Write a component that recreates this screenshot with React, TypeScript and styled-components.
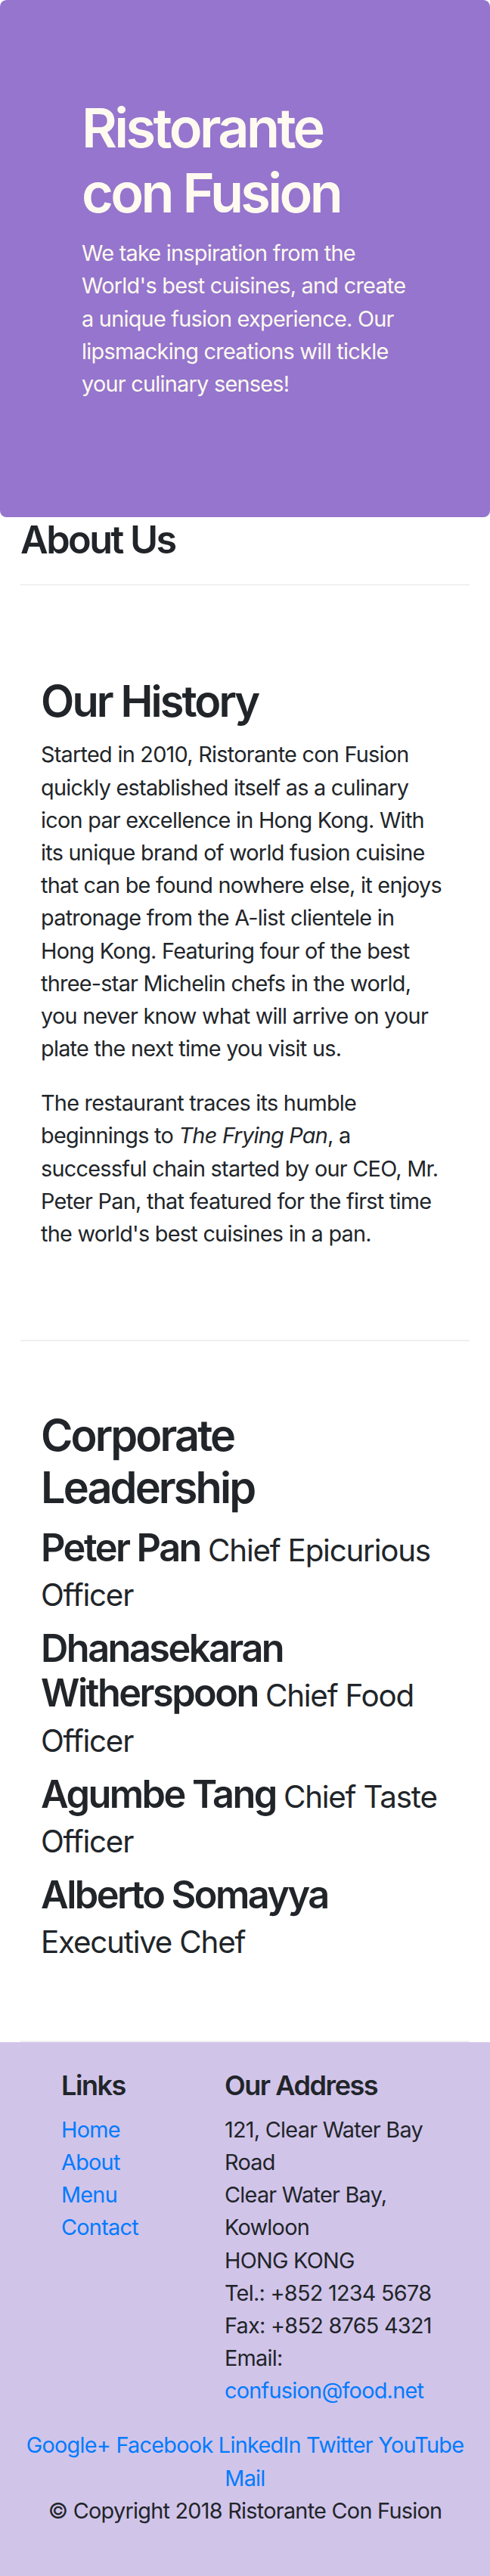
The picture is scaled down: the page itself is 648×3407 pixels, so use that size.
import React from "react";
import styled, { createGlobalStyle } from "styled-components";

const GlobalStyle = createGlobalStyle`
  html { font-size: 28.8px; }
  body {
    margin: 0;
    font-family: Inter, "Noto Sans", "Liberation Sans", sans-serif;
    font-size: 28.8px;
    line-height: 1.5;
    letter-spacing: -0.025em;
    color: #212529;
    background: #fff;
    -webkit-font-smoothing: antialiased;
  }
  * { box-sizing: border-box; }
`;

const Page = styled.div`
  display: flex;
  flex-direction: column;
  min-height: 100vh;
`;

const Jumbotron = styled.header`
  background: #9575cd;
  color: floralwhite;
  padding: 126px 54px;
  border-radius: 8.6px;
`;

const Hero = styled.div`
  padding: 0 54px;
`;

const HeroTitle = styled.h1`
  font-size: 72px;
  line-height: 1.2;
  font-weight: 600;
  letter-spacing: -0.05em;
  margin: 0 0 14.4px;
`;

const HeroLead = styled.p`
  margin: 0 0 28.8px;
`;

const Container = styled.main`
  padding: 0 27px;
`;

const PageTitle = styled.h3`
  font-size: 50.4px;
  line-height: 1.2;
  font-weight: 600;
  letter-spacing: -0.05em;
  margin: 0 0 14.4px;
`;

const Divider = styled.hr`
  margin: 28.8px 0;
  border: 0;
  border-top: 1.8px solid rgba(0, 0, 0, 0.1);
`;

const Section = styled.section`
  padding: 90px 27px;
  border-bottom: 2px solid #efefef;
`;

const SectionTitle = styled.h2`
  font-size: 57.6px;
  line-height: 1.2;
  font-weight: 600;
  letter-spacing: -0.05em;
  margin: 0 0 14.4px;
`;

const Paragraph = styled.p`
  margin: 0 0 28.8px;
`;

const LeaderName = styled.h3`
  font-size: 50.4px;
  line-height: 1.18;
  font-weight: 600;
  letter-spacing: -0.05em;
  margin: 0 0 14.4px;
`;

const Designation = styled.small`
  font-size: 80%;
  font-weight: 400;
  letter-spacing: -0.03em;
`;

const Footer = styled.footer`
  flex: 1 0 auto;
  background: #d1c4e9;
  padding: 36px 0;
`;

const FooterContainer = styled.div`
  padding: 0 27px;
`;

const FooterRow = styled.div`
  display: flex;
  flex-wrap: wrap;
  justify-content: center;
  margin: 0 -27px;
`;

const FooterCol = styled.div<{ $width: string; $offset?: string; $center?: boolean }>`
  flex: 0 0 ${(p) => p.$width};
  max-width: ${(p) => p.$width};
  margin-left: ${(p) => p.$offset ?? "0"};
  padding: 0 27px;
  text-align: ${(p) => (p.$center ? "center" : "left")};
`;

const FooterHeading = styled.h5`
  font-size: 36px;
  line-height: 1.2;
  font-weight: 600;
  letter-spacing: -0.04em;
  margin: 0 0 14.4px;
`;

const LinkList = styled.ul`
  list-style: none;
  padding: 0;
  margin: 0 0 28.8px;
`;

const Link = styled.a`
  color: #007bff;
  text-decoration: none;
`;

const Address = styled.address`
  font-style: normal;
  margin: 0 0 28.8px;
`;

const Copyright = styled.p`
  margin: 0 0 28.8px;
`;

const leaders = [
  { name: "Peter Pan", title: "Chief Epicurious Officer" },
  { name: "Dhanasekaran Witherspoon", title: "Chief Food Officer" },
  { name: "Agumbe Tang", title: "Chief Taste Officer" },
  { name: "Alberto Somayya", title: "Executive Chef" },
];

const socials = ["Google+", "Facebook", "LinkedIn", "Twitter", "YouTube", "Mail"];

export default function App() {
  return (
    <Page>
      <GlobalStyle />
      <Jumbotron>
        <Hero>
          <HeroTitle>Ristorante con Fusion</HeroTitle>
          <HeroLead>
            We take inspiration from the World's best cuisines, and create a unique fusion
            experience. Our lipsmacking creations will tickle your culinary senses!
          </HeroLead>
        </Hero>
      </Jumbotron>
      <Container>
        <PageTitle>About Us</PageTitle>
        <Divider />
        <Section>
          <SectionTitle>Our History</SectionTitle>
          <Paragraph>
            Started in 2010, Ristorante con Fusion quickly established itself as a culinary icon
            par excellence in Hong Kong. With its unique brand of world fusion cuisine that can be
            found nowhere else, it enjoys patronage from the A-list clientele in Hong Kong.
            Featuring four of the best three-star Michelin chefs in the world, you never know what
            will arrive on your plate the next time you visit us.
          </Paragraph>
          <Paragraph>
            The restaurant traces its humble beginnings to <em>The Frying Pan</em>, a successful
            chain started by our CEO, Mr. Peter Pan, that featured for the first time the world's
            best cuisines in a pan.
          </Paragraph>
        </Section>
        <Section>
          <SectionTitle>Corporate Leadership</SectionTitle>
          {leaders.map((l) => (
            <LeaderName key={l.name}>
              {l.name} <Designation>{l.title}</Designation>
            </LeaderName>
          ))}
        </Section>
      </Container>
      <Footer>
        <FooterContainer>
          <FooterRow>
            <FooterCol $width="216px" $offset="54px">
              <FooterHeading>Links</FooterHeading>
              <LinkList>
                <li><Link href="#">Home</Link></li>
                <li><Link href="#">About</Link></li>
                <li><Link href="#">Menu</Link></li>
                <li><Link href="#">Contact</Link></li>
              </LinkList>
            </FooterCol>
            <FooterCol $width="378px">
              <FooterHeading>Our Address</FooterHeading>
              <Address>
                121, Clear Water Bay Road<br />
                Clear Water Bay, Kowloon<br />
                HONG KONG<br />
                Tel.: +852 1234 5678<br />
                Fax: +852 8765 4321<br />
                Email: <Link href="#">confusion@food.net</Link>
              </Address>
            </FooterCol>
            <FooterCol $width="100%" $center>
              {socials.map((s, i) => (
                <React.Fragment key={s}>
                  <Link href="#">{s}</Link>
                  {i < socials.length - 1 ? " " : null}
                </React.Fragment>
              ))}
            </FooterCol>
          </FooterRow>
          <FooterRow>
            <FooterCol $width="auto">
              <Copyright>© Copyright 2018 Ristorante Con Fusion</Copyright>
            </FooterCol>
          </FooterRow>
        </FooterContainer>
      </Footer>
    </Page>
  );
}
